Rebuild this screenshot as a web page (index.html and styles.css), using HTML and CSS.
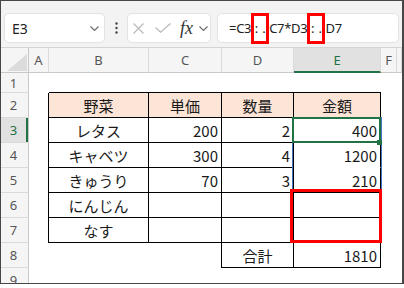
FILE: index.html
```html
<!DOCTYPE html>
<html lang="ja">
<head>
<meta charset="UTF-8"/>
<meta name="viewport" content="width=device-width,initial-scale=1.0"/>
<title>TRIMRANGE</title>
<link rel="stylesheet" href="styles.css">
</head>
<body>
<div class="window">

  <!-- formula bar -->
  <div class="bar">
    <div class="name-box">
      <span>E3</span>
      <svg class="chev" width="9" height="5" viewBox="0 0 9 5"><path d="M0.5 0.5 4.5 4.5 8.5 0.5"/></svg>
    </div>
    <svg class="dots" width="3" height="12" viewBox="0 0 3 12"><circle cx="1.5" cy="1.5" r="1.2"/><circle cx="1.5" cy="6" r="1.2"/><circle cx="1.5" cy="10.5" r="1.2"/></svg>
    <div class="fx-box">
      <svg class="cancel" width="11" height="11" viewBox="0 0 11 11"><path d="M0.5 0.5 10.5 10.5M10.5 0.5 0.5 10.5"/></svg>
      <svg class="enter" width="16" height="10" viewBox="0 0 16 10"><path d="M0.5 4.5 5.5 9.2 15.5 0.5"/></svg>
      <span class="fx">fx</span>
      <svg class="chev" width="9" height="5" viewBox="0 0 9 5"><path d="M0.5 0.5 4.5 4.5 8.5 0.5"/></svg>
    </div>
    <div class="formula">=C3<span class="mark"><i>:</i><i>.</i></span>C7*D3<span class="mark"><i>:</i><i>.</i></span>D7</div>
  </div>

  <!-- sheet -->
  <div class="sheet">
    <div class="corner"><svg width="20" height="17" viewBox="0 0 20 17"><polygon points="0,17 20,17 20,0"/></svg></div>
    <div class="ch">A</div><div class="ch">B</div><div class="ch">C</div><div class="ch">D</div><div class="ch sel">E</div><div class="ch">F</div><div class="ch"></div>

    <div class="rh">1</div>
    <div></div><div class="tt"></div><div class="tt"></div><div class="tt"></div><div class="tt"></div><div></div><div></div>

    <div class="rh">2</div>
    <div class="tl"></div><div class="t h">野菜</div><div class="t h">単価</div><div class="t h">数量</div><div class="t h">金額</div><div></div><div></div>

    <div class="rh sel">3</div>
    <div class="tl"></div><div class="t ctr">レタス</div><div class="t num">200</div><div class="t num">2</div><div class="t num">400</div><div></div><div></div>

    <div class="rh">4</div>
    <div class="tl"></div><div class="t ctr">キャベツ</div><div class="t num">300</div><div class="t num">4</div><div class="t num open">1200</div><div></div><div></div>

    <div class="rh">5</div>
    <div class="tl"></div><div class="t ctr">きゅうり</div><div class="t num">70</div><div class="t num">3</div><div class="t num">210</div><div></div><div></div>

    <div class="rh">6</div>
    <div class="tl"></div><div class="t ctr">にんじん</div><div class="t"></div><div class="t"></div><div class="t"></div><div></div><div></div>

    <div class="rh">7</div>
    <div class="tl"></div><div class="t ctr">なす</div><div class="t"></div><div class="t"></div><div class="t"></div><div></div><div></div>

    <div class="rh">8</div>
    <div></div><div></div><div class="edge-r"></div><div class="t ctr">合計</div><div class="t num">1810</div><div></div><div></div>

    <div class="rh">9</div>
    <div></div><div></div><div></div><div></div><div></div><div></div><div></div>

    <!-- overlays -->
    <div class="spill"></div>
    <div class="active"></div>
    <div class="handle"></div>
    <div class="hilite"></div>
  </div>
</div>
</body>
</html>
```

FILE: styles.css
```css
*{margin:0;padding:0;box-sizing:border-box}
body{background:#fff;font-family:"Noto Sans","Noto Sans CJK JP",sans-serif;color:#222}

.window{width:404px;height:284px;border:1px solid #474747;border-right-width:2px;overflow:hidden}

/* ---------- formula bar ---------- */
.bar{display:flex;align-items:center;height:47px;padding:12px 3px 4px;background:#f3f3f3;border-bottom:1px solid #d4d4d4}
.name-box{
  display:flex;align-items:center;width:101px;height:30px;padding:0 5px 0 7px;
  background:#fff;border:1px solid #e2e2e2;border-radius:5px;font-size:14px;color:#222
}
.name-box .chev{margin-left:auto}
.chev{fill:none;stroke:#6a6a6a;stroke-width:1.1}
.dots{margin-left:10px;fill:#444}
.fx-box{
  display:flex;align-items:center;width:84px;height:30px;margin-left:9px;padding-left:5px;
  background:#fff;border:1px solid #e2e2e2;border-radius:5px
}
.cancel,.enter{fill:none;stroke:#b9b9b9;stroke-width:1.2}
.enter{margin-left:11px}
.fx{margin-left:9px;font:italic 18px "Liberation Serif",serif;color:#333;line-height:1}
.fx-box .chev{margin-left:auto;margin-right:2px}
.formula{
  flex:1;display:flex;align-items:center;height:30px;margin-left:6px;padding-left:11px;
  background:#fff;border:1px solid #e2e2e2;border-radius:5px;font-size:13px;letter-spacing:-.3px;color:#222
}
.mark{
  display:flex;align-items:center;justify-content:center;gap:4px;flex:none;width:18px;height:31px;
  border:3px solid #f00;letter-spacing:0
}
.mark i{font-style:normal}

/* ---------- sheet grid ---------- */
.sheet{
  position:relative;height:235px;overflow:hidden;display:grid;
  grid-template-columns:28px 20px 100px 73px 72px 87px 16px 1fr;
  grid-template-rows:25px 20px repeat(8,25px);
  font:15px "Noto Sans CJK JP",sans-serif;color:#1a1a1a
}
.sheet>div{display:flex;align-items:center;white-space:nowrap}

.corner{justify-content:flex-end;align-items:flex-end!important;padding:0 1px 1px 0;background:#f5f5f5;border-right:1px solid #c8c8c8;border-bottom:1px solid #c8c8c8}
.corner svg{fill:#dcdcdc}

.ch{justify-content:center;background:#f5f5f5;border-right:1px solid #dadada;border-bottom:1px solid #c8c8c8;font:13px "Noto Sans",sans-serif;color:#555}
.ch.sel{background:#e1e1e1;border-bottom:2px solid #217346;color:#217346}
.rh{justify-content:center;padding-right:2px;background:#f5f5f5;border-right:1px solid #c8c8c8;border-bottom:1px solid #dadada;font:13px "Noto Sans",sans-serif;color:#555}
.rh.sel{background:#e1e1e1;color:#217346;box-shadow:inset -2px 0 0 #217346}

/* table borders */
.tt{border-bottom:1px solid #000}
.tl{border-right:1px solid #000}
.edge-r{border-right:1px solid #000}
.t{border-right:1px solid #000;border-bottom:1px solid #000}
.t.open{border-bottom-color:transparent}
.h{justify-content:center;background:#fce4d6}
.ctr{justify-content:center}
.num{justify-content:flex-end;padding-right:3px}

/* selection & highlights */
.spill{position:absolute;left:291px;top:69px;width:90px;height:75px;border:1px solid #4472c4}
.active{position:absolute;left:291px;top:69px;width:89px;height:26px;border:2px solid #217346}
.handle{position:absolute;left:376px;top:92px;width:5px;height:5px;background:#217346}
.hilite{position:absolute;left:289px;top:141px;width:92px;height:54px;border:3px solid #f00}
```
